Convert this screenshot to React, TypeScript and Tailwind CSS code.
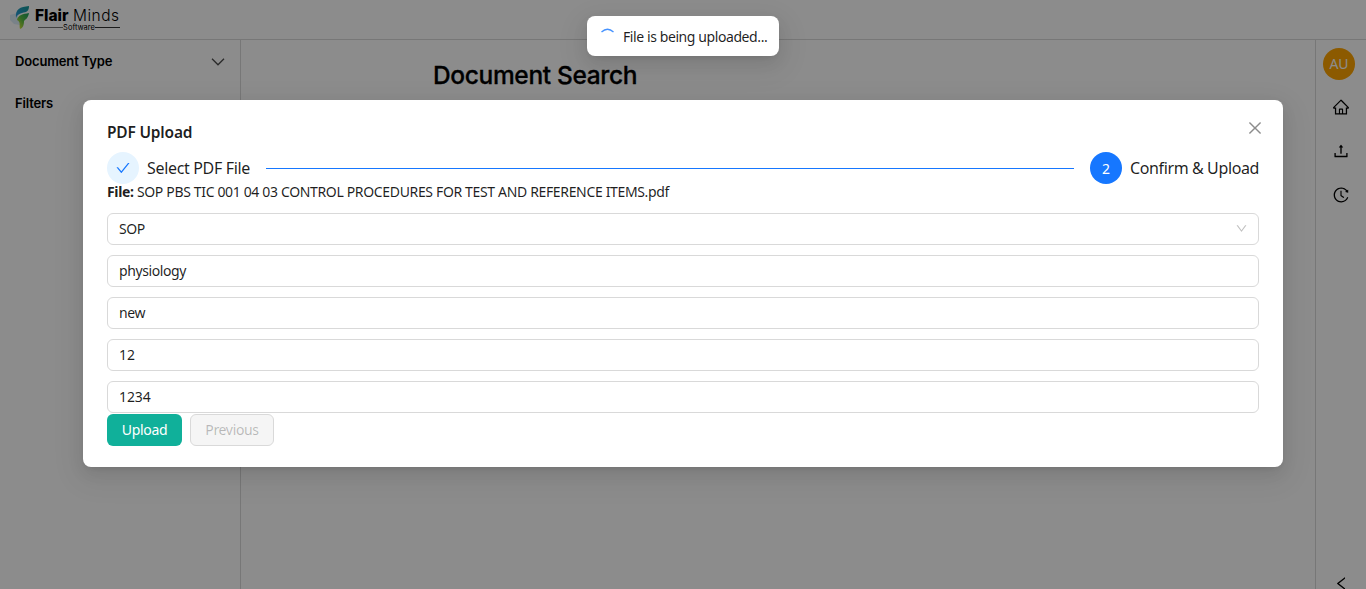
import { AiOutlineCheck, AiOutlineClose, AiOutlineDown, AiOutlineHistory, AiOutlineHome, AiOutlineLeft, AiOutlineUpload } from "react-icons/ai";

function Logo() {
  return (
    <div className="flex pl-[9px] pt-[5px]">
      <svg width="22" height="26" viewBox="0 0 22 26" className="shrink-0">
        <defs>
          <linearGradient id="top" x1="0" y1="1" x2="1" y2="0">
            <stop offset="0" stopColor="#2a9ae0" />
            <stop offset="1" stopColor="#159a94" />
          </linearGradient>
          <linearGradient id="low" x1="0" y1="1" x2="1" y2="0">
            <stop offset="0" stopColor="#f2ea3a" />
            <stop offset="0.5" stopColor="#5cc043" />
            <stop offset="1" stopColor="#159b62" />
          </linearGradient>
        </defs>
        <path d="M1 10 L8 8 L11 20 L5 19 L1 15Z" fill="#cfe6f5" opacity=".7" />
        <path d="M7 13 C6 4 11 2 20 1 C20 6 18 7 13 8 C10 9 8 10 7 13Z" fill="url(#top)" />
        <path d="M8 15 C9 10 14 9 20 8 C19 13 17 14 15 16 C15 20 14 23 11 24 C10 20 12 17 8 15Z" fill="url(#low)" />
      </svg>
      <div className="ml-1 h-[27px] w-[86px] font-['Inter',sans-serif] text-black">
        <div className="flex gap-[3px] text-[15.5px] leading-[22px] whitespace-nowrap">
          <span className="w-[35px] font-extrabold">Flair</span>
          <span className="font-light tracking-[0.5px]">Minds</span>
        </div>
        <div className="-mt-[3px] ml-[3px] flex items-center text-[7.5px] leading-[7px]">
          <span className="h-px w-[25px] bg-[#777]" />
          <span className="w-[32px] text-center">Software</span>
          <span className="h-px w-[25px] bg-[#333]" />
        </div>
      </div>
    </div>
  );
}

function SectionChevron() {
  return (
    <svg width="14" height="8" viewBox="0 0 14 8" fill="none" stroke="#000" strokeOpacity=".7" strokeWidth="1.3">
      <path d="M1 0.800 L7 6.800 L13 0.800" />
    </svg>
  );
}

function Field({ value, select = false, numeric = false }: { value: string; select?: boolean; numeric?: boolean }) {
  return (
    <div className="flex h-8 items-center justify-between rounded-md border border-[#d9d9d9] pl-[11px] pr-[10px] pb-[2px] text-[14px]">
      <span className={numeric ? "tracking-[-0.1px]" : "tracking-[-0.4px]"}>{value}</span>
      {select && <AiOutlineDown className="mt-px text-[13px] text-black/25" />}
    </div>
  );
}

export default function App() {
  return (
    <div className="relative h-[589px] w-[1366px] overflow-hidden bg-white font-['Noto_Sans',sans-serif]">
      <div className="flex h-full flex-col">
        <header className="h-10 shrink-0 border-b border-[#d9d9d9]">
          <Logo />
        </header>
        <div className="flex min-h-0 flex-1 font-['Inter',sans-serif] text-black">
          <aside className="w-[241px] border-r border-[#d9d9d9] pl-[15px] pr-[15px] pt-px text-[13px] font-semibold tracking-[-0.15px]">
            <div className="flex h-[42px] items-center justify-between">
              <span>Document Type</span>
              <SectionChevron />
            </div>
            <div className="flex h-[42px] items-center justify-between">
              <span>Filters</span>
              <SectionChevron />
            </div>
          </aside>
          <main className="flex-1 pl-[192px] pt-[17px]">
            <h1 className="text-[24.5px] leading-9 font-medium tracking-[-0.35px] [-webkit-text-stroke:0.3px_black]">Document Search</h1>
          </main>
          <nav className="flex w-[51px] shrink-0 flex-col items-center border-l border-[#d9d9d9] pt-2 text-[18px]">
            <div className="mr-1 flex size-8 shrink-0 items-center justify-center rounded-full bg-[#ffa500] pb-0.5 font-['Noto_Sans',sans-serif] text-[14px] text-white">AU</div>
            <AiOutlineHome className="mt-[18px] shrink-0" />
            <AiOutlineUpload className="mt-[26px] shrink-0" />
            <AiOutlineHistory className="mt-[26px] shrink-0" />
            <AiOutlineLeft className="mt-[371px] shrink-0 text-[17px]" />
          </nav>
        </div>
      </div>

      <div className="absolute inset-0 bg-black/45" />

      <section className="absolute left-[83px] top-[100px] h-[367px] w-[1200px] rounded-lg bg-white px-6 pt-5 text-[14px] text-black/88 shadow-[0_6px_16px_0_rgba(0,0,0,0.08),0_3px_6px_-4px_rgba(0,0,0,0.12),0_9px_28px_8px_rgba(0,0,0,0.05)]">
        <div className="flex h-6 items-center justify-between">
          <h2 className="pt-0.5 text-[15.5px] font-semibold tracking-[-0.2px]">PDF Upload</h2>
          <AiOutlineClose className="-mt-2 mr-[-5px] text-[18px] text-black/45" />
        </div>
        <div className="mt-2 flex h-8 items-center text-[16px]">
          <span className="flex size-8 items-center justify-center rounded-full bg-[#e6f4ff] text-[#1677ff]">
            <AiOutlineCheck className="text-[16px]" />
          </span>
          <span className="ml-2 w-[103px] tracking-[-0.33px] whitespace-nowrap">Select PDF File</span>
          <span className="mx-4 h-px flex-1 bg-[#1677ff]" />
          <span className="flex size-8 items-center justify-center rounded-full bg-[#1677ff] text-[14px] text-white">2</span>
          <span className="ml-2 w-[129px] tracking-[-0.38px] whitespace-nowrap">Confirm &amp; Upload</span>
        </div>
        <p className="h-[29px] leading-4 tracking-[-0.345px]"><b>File:</b> <span>SOP PBS TIC 001 04 03 CONTROL PROCEDURES FOR TEST AND REFERENCE ITEMS.pdf</span></p>
        <div className="flex flex-col gap-2.5">
          <Field value="SOP" select />
          <Field value="physiology" />
          <Field value="new" />
          <Field value="12" numeric />
          <Field value="1234" numeric />
        </div>
        <div className="mt-px flex gap-2">
          <button className="h-8 w-[75px] rounded-md bg-[#10b09a] pb-0.5 tracking-[-0.3px] text-white">Upload</button>
          <button className="h-8 w-[84px] rounded-md border border-[#d9d9d9] bg-[#f5f5f5] pb-0.5 tracking-[-0.35px] text-black/25">Previous</button>
        </div>
      </section>

      <div className="absolute left-[587px] top-4 flex h-10 w-[192px] items-center rounded-lg bg-white pl-[14px] text-[14px] text-black/88 shadow-[0_6px_16px_0_rgba(0,0,0,0.08),0_3px_6px_-4px_rgba(0,0,0,0.12),0_9px_28px_8px_rgba(0,0,0,0.05)]">
        <svg width="14" height="16" viewBox="0 0 14 16" className="mr-2 shrink-0" fill="none" stroke="#1677ff" strokeOpacity=".8" strokeWidth="1.3">
          <path d="M0.500 4 Q6.500 -1.500 12.500 4" />
        </svg>
        <span className="tracking-[-0.41px] whitespace-nowrap">File is being uploaded...</span>
      </div>
    </div>
  );
}
